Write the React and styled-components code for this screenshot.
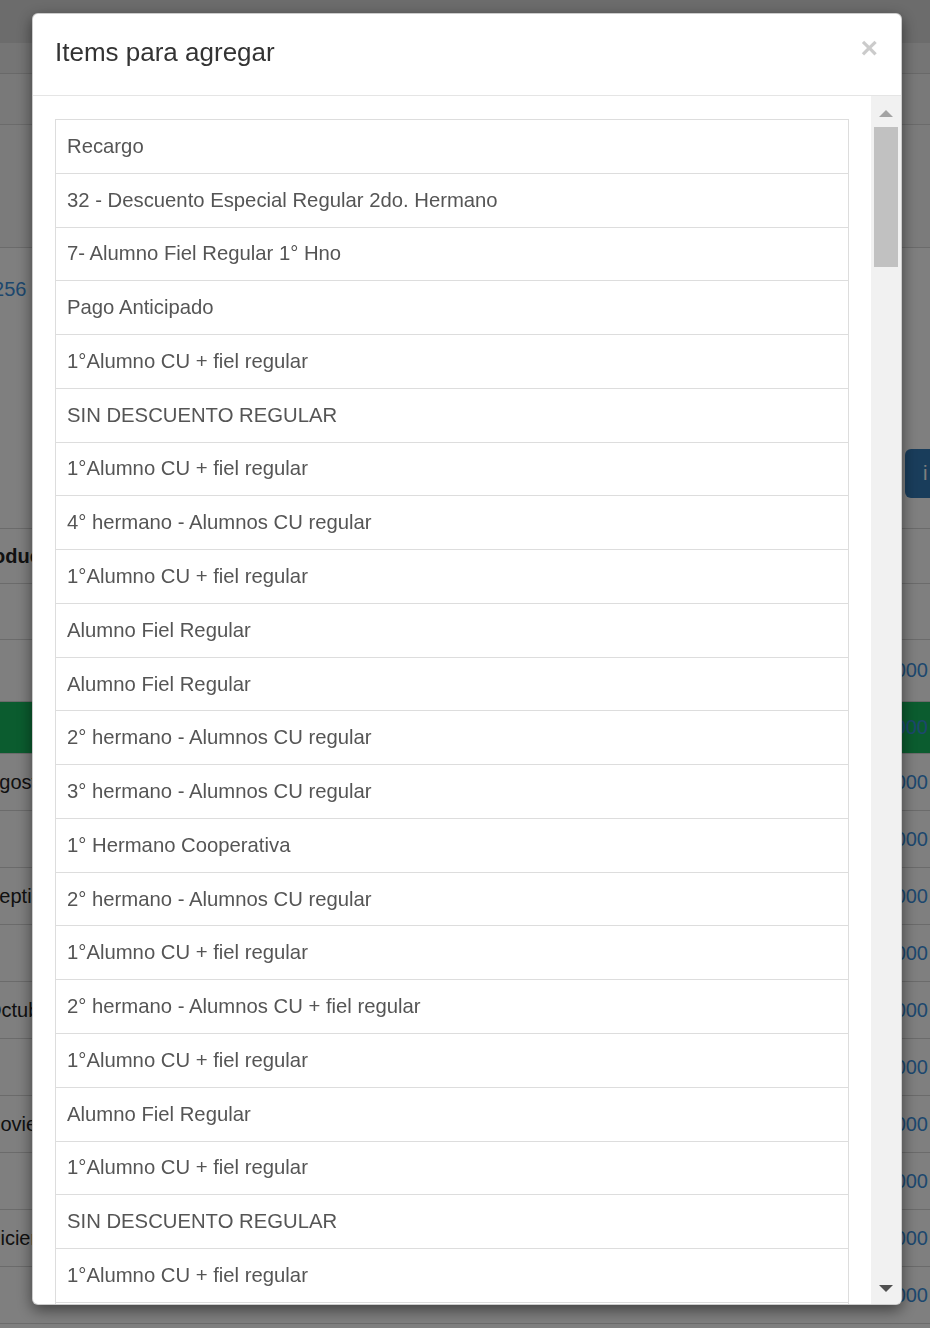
import styled, { createGlobalStyle } from "styled-components"

const GlobalStyle = createGlobalStyle`
    html, body {
        margin: 0;
        padding: 0;
        overflow: hidden;
        font-family: "Liberation Sans", Arial, sans-serif;
    }
`

/* ---- page behind the modal ---- */
const Page = styled.div`
    margin: 0 -40px;
    height: 1328px;
    overflow: hidden;
    background: #fff;
    color: #333;
`
const TopNav = styled.div`
    height: 43px;
    background: #d9d9d9;
`
const SubNav = styled.div`
    height: 30px;
    background: #ebebeb;
    border-bottom: 1px solid #d2d2d2;
`
const Band = styled.div`
    height: ${({h}) => h}px;
    background: ${({bg}) => bg};
    border-bottom: 1px solid #d6d6d6;
`
const InfoPanel = styled.div`
    height: 281px;
    box-sizing: border-box;
    border-bottom: 1px solid #d6d6d6;
    padding: 30px 0 0 22px;
    display: flex;
    flex-direction: column;
    background: #fff;
`
const InfoLink = styled.a`
    font-size: 20px;
    color: #3a8fdc;
    text-decoration: none;
`
const Actions = styled.div`
    margin-top: auto;
    margin-bottom: 30px;
    display: flex;
    justify-content: flex-end;
`
const PrimaryButton = styled.button`
    width: 65px;
    height: 49px;
    border: none;
    border-radius: 6px;
    background: #337ab7;
    color: #fff;
    font-size: 20px;
    text-align: left;
    padding: 0 0 0 18px;
    overflow: hidden;
    white-space: nowrap;
    font-family: inherit;
`
const Table = styled.div`
    display: flex;
    flex-direction: column;
`
const TRow = styled.div`
    height: ${({h}) => h || 57}px;
    box-sizing: border-box;
    border-bottom: 1px solid #d6d6d6;
    display: flex;
    align-items: center;
    justify-content: space-between;
    padding: 0 42px 0 26px;
    background: ${({green}) => (green ? "#16b95e" : "#fff")};
    font-size: 20px;
`
const Cell = styled.span`
    font-weight: ${({bold}) => (bold ? 700 : 400)};
    margin-left: ${({bold}) => (bold ? "-14px" : "0")};
    color: #222;
`
const Amount = styled.span`
    color: #3a8fdc;
`

/* ---- modal ---- */
const Backdrop = styled.div`
    position: fixed;
    inset: 0;
    background: rgba(0, 0, 0, 0.5);
`
const Modal = styled.div`
    position: fixed;
    top: 13px;
    left: 32px;
    width: 870px;
    height: 1292px;
    box-sizing: border-box;
    background: #fff;
    border: 1px solid rgba(0, 0, 0, 0.2);
    border-radius: 6px;
    box-shadow: 0 5px 15px rgba(0, 0, 0, 0.5);
    display: flex;
    flex-direction: column;
    overflow: hidden;
`
const Header = styled.div`
    height: 82px;
    flex: none;
    box-sizing: border-box;
    border-bottom: 1px solid #e5e5e5;
    padding: 0 23px 0 22px;
    display: flex;
    align-items: center;
    justify-content: space-between;
`
const Title = styled.h4`
    margin: -3px 0 0 0;
    font-size: 26px;
    font-weight: 400;
    color: #333;
    line-height: 1.2;
`
const Close = styled.button`
    border: none;
    background: transparent;
    padding: 0;
    margin-top: -14px;
    font-family: inherit;
    font-size: 30px;
    font-weight: 700;
    line-height: 1;
    color: #000;
    opacity: 0.2;
`
const Body = styled.div`
    flex: 1;
    display: flex;
    min-height: 0;
`
const ListPane = styled.div`
    flex: 1;
    overflow: hidden;
    padding: 23px 22px 0 22px;
`
const List = styled.div`
    border: 1px solid #ddd;
    border-top: none;
`
const Item = styled.div`
    height: 53.77px;
    box-sizing: border-box;
    border-top: 1px solid #ddd;
    padding: 0 11px;
    display: flex;
    align-items: center;
    font-size: 20.3px;
    color: #555;
    white-space: nowrap;
`
const ScrollBar = styled.div`
    width: 30px;
    flex: none;
    background: #f1f1f1;
    display: flex;
    flex-direction: column;
`
const ArrowButton = styled.div`
    height: 30px;
    flex: none;
    display: flex;
    align-items: center;
    justify-content: center;
    &::after {
        content: "";
        width: 0;
        height: 0;
        border-left: 7px solid transparent;
        border-right: 7px solid transparent;
        ${({down}) => down
            ? "border-top: 7px solid #505050; margin-top: -2px;"
            : "border-bottom: 7px solid #a3a3a3; margin-top: 4px;"}
    }
`
const Track = styled.div`
    flex: 1;
    padding: 1px 3px 0 3px;
`
const Thumb = styled.div`
    height: 140px;
    background: #c1c1c1;
`

const items = [
    "Recargo",
    "32 - Descuento Especial Regular 2do. Hermano",
    "7- Alumno Fiel Regular 1° Hno",
    "Pago Anticipado",
    "1°Alumno CU + fiel regular",
    "SIN DESCUENTO REGULAR",
    "1°Alumno CU + fiel regular",
    "4° hermano - Alumnos CU regular",
    "1°Alumno CU + fiel regular",
    "Alumno Fiel Regular",
    "Alumno Fiel Regular",
    "2° hermano - Alumnos CU regular",
    "3° hermano - Alumnos CU regular",
    "1° Hermano Cooperativa",
    "2° hermano - Alumnos CU regular",
    "1°Alumno CU + fiel regular",
    "2° hermano - Alumnos CU + fiel regular",
    "1°Alumno CU + fiel regular",
    "Alumno Fiel Regular",
    "1°Alumno CU + fiel regular",
    "SIN DESCUENTO REGULAR",
    "1°Alumno CU + fiel regular",
    "Alumno Fiel Regular",
    "2° hermano - Alumnos CU regular",
    "Pago Anticipado",
]

const rows = [
    { h: 55, label: "Producto", bold: true },
    { h: 56 },
    { h: 62, amount: "$ 4.000" },
    { h: 52, amount: "$ 4.000", green: true },
    { label: "Agosto", amount: "$ 4.000" },
    { amount: "$ 2.000" },
    { label: "Septiembre", amount: "$ 4.000" },
    { amount: "$ 2.000" },
    { label: "Octubre", amount: "$ 4.000" },
    { amount: "$ 2.000" },
    { label: "Noviembre", amount: "$ 4.000" },
    { amount: "$ 2.000" },
    { label: "Diciembre", amount: "$ 4.000" },
    { amount: "$ 2.000" },
]

const App = () => {
  return (
    <>
        <GlobalStyle />
        <Page>
            <TopNav />
            <SubNav />
            <Band h={50} bg="#f2f2f2" />
            <Band h={122} bg="#f6f6f6" />
            <InfoPanel>
                <InfoLink href="#">1256</InfoLink>
                <Actions>
                    <PrimaryButton>i Agregar</PrimaryButton>
                </Actions>
            </InfoPanel>
            <Table>
                {rows.map((r, i) => (
                    <TRow key={i} h={r.h} green={r.green}>
                        <Cell bold={r.bold}>{r.label || ""}</Cell>
                        <Amount>{r.amount || ""}</Amount>
                    </TRow>
                ))}
            </Table>
        </Page>
        <Backdrop />
        <Modal>
            <Header>
                <Title>Items para agregar</Title>
                <Close>×</Close>
            </Header>
            <Body>
                <ListPane>
                    <List>
                        {items.map((t, i) => (
                            <Item key={i}>{t}</Item>
                        ))}
                    </List>
                </ListPane>
                <ScrollBar>
                    <ArrowButton />
                    <Track>
                        <Thumb />
                    </Track>
                    <ArrowButton down />
                </ScrollBar>
            </Body>
        </Modal>
    </>
  )
}

export default App
